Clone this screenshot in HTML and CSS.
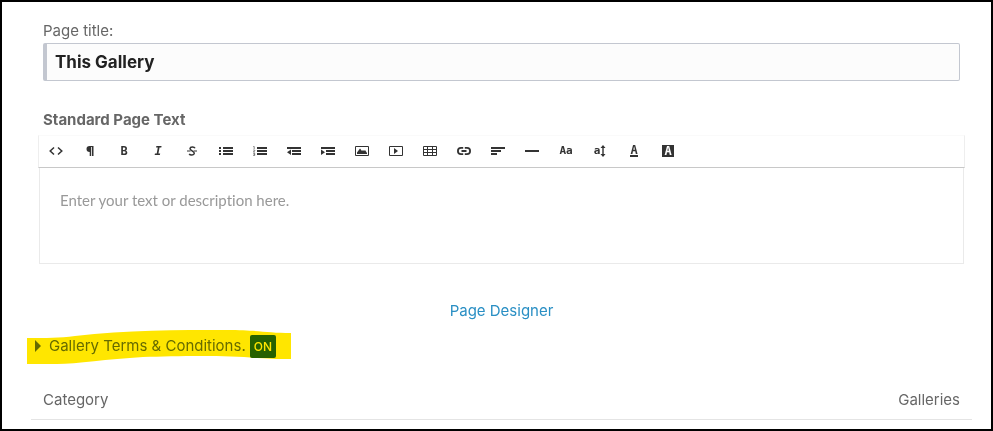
FILE: index.html
```html
<!DOCTYPE html>
<html lang="en">
<head>
<meta charset="utf-8">
<title>Gallery page settings</title>
<link rel="stylesheet" href="styles.css">
</head>
<body>
<main class="frame">
  <form class="fields">
    <label class="label" for="page-title">Page title:</label>
    <input class="title-input" id="page-title" type="text" value="This Gallery">
    <h2 class="heading" id="text-heading">Standard Page Text</h2>
  </form>

  <section class="editor" aria-labelledby="text-heading">
    <div class="toolbar" role="toolbar" aria-label="Formatting">
      <button class="tool" type="button" aria-label="HTML"><svg viewBox="0 0 14 14"><path class="line" d="M5 3.500 1.200 7 5 10.500M9 3.500 12.800 7 9 10.500"/></svg></button>
      <button class="tool" type="button" aria-label="Format"><svg viewBox="0 0 14 14"><path d="M10.500 2v10H9V3h-.8v9H6.700V8C4.500 8 3.500 6.800 3.500 5s1-3 3.200-3z"/></svg></button>
      <button class="tool" type="button" aria-label="Bold">B</button>
      <button class="tool italic" type="button" aria-label="Italic">I</button>
      <button class="tool" type="button" aria-label="Strikethrough"><svg viewBox="0 0 14 14"><path class="line" d="M10 4.200C9.300 2.600 5.200 2.500 5 4.600 4.900 6.500 9.500 7.200 9.300 9.300 9.100 11.400 5 11.300 4.200 9.800"/><path d="M2 6.400h3.500v1.200H2zM8.500 6.400H12v1.200H8.500z"/></svg></button>
      <button class="tool" type="button" aria-label="Bulleted list"><svg viewBox="0 0 14 14"><path d="M0 3h2v2H0zM0 6h2v2H0zM0 9h2v2H0zM4 3h10v2H4zM4 6h10v2H4zM4 9h10v2H4z"/></svg></button>
      <button class="tool" type="button" aria-label="Numbered list"><svg viewBox="0 0 14 14"><path d="M4 3h10v2H4zM4 6h10v2H4zM4 9h10v2H4z"/><path class="thin" d="M.3 2.500h.9V5M.2 6h1.500v.7L.4 8h1.500M.2 9.300h1.500v2.200H.2M.6 10.400h1"/></svg></button>
      <button class="tool" type="button" aria-label="Outdent"><svg viewBox="0 0 14 14"><path d="M0 3h14v2H0zM5 6h9v2H5zM5 9h9v2H5zM4 5.500v5.500L0 8.200z"/></svg></button>
      <button class="tool" type="button" aria-label="Indent"><svg viewBox="0 0 14 14"><path d="M0 3h14v2H0zM5 6h9v2H5zM5 9h9v2H5zM0 5.500V11l4-2.800z"/></svg></button>
      <button class="tool" type="button" aria-label="Image"><svg viewBox="0 0 14 14"><path class="box" d="M.5 2.500h13v9H.5z"/><path d="M2 10V8.500l3-4 2 2.500 1-1 1 1 1-1 2 3v1z"/></svg></button>
      <button class="tool" type="button" aria-label="Video"><svg viewBox="0 0 14 14"><path class="box" d="M.5 2.500h13v9H.5z"/><path d="M5 4v6l4-3z"/></svg></button>
      <button class="tool" type="button" aria-label="Table"><svg viewBox="0 0 14 14"><path class="box" d="M.5 2.500h13v9H.5zM.5 5.500h13M.5 8.500h13M4.500 2.500v9M9.500 2.500v9"/></svg></button>
      <button class="tool" type="button" aria-label="Link"><svg viewBox="0 0 14 14"><path class="link-line" d="M6.200 3.900H4a3.100 3.100 0 0 0 0 6.200h2.200M7.800 3.900H10a3.100 3.100 0 0 1 0 6.200H7.800M4.500 7h5"/></svg></button>
      <button class="tool" type="button" aria-label="Alignment"><svg viewBox="0 0 14 14"><path d="M0 3h14v2H0zM0 6h10v2H0zM0 9h6v2H0z"/></svg></button>
      <button class="tool" type="button" aria-label="Horizontal rule"><svg viewBox="0 0 14 14"><path d="M0 6h14v2H0z"/></svg></button>
      <button class="tool small" type="button" aria-label="Font">Aa</button>
      <button class="tool small" type="button" aria-label="Font size">a<svg class="arrow" viewBox="0 0 6 14"><path d="M3 1 5.500 4H3.700v6h1.800L3 13 .5 10h1.800V4H.5z"/></svg></button>
      <button class="tool" type="button" aria-label="Text colour"><span class="underlined">A</span></button>
      <button class="tool" type="button" aria-label="Background colour"><span class="inverse">A</span></button>
    </div>
    <textarea class="text" aria-label="Standard Page Text" placeholder="Enter your text or description here."></textarea>
  </section>

  <nav class="designer"><a href="#designer">Page Designer</a></nav>

  <div class="terms-row">
    <button class="terms" type="button" aria-expanded="false">
      <svg class="caret" viewBox="0 0 6 12"><path d="M0 0l6 6-6 6z"/></svg>
      <span class="terms-label">Gallery Terms &amp; Conditions.</span>
      <span class="badge">ON</span>
    </button>
    <svg class="marker" viewBox="0 0 264 34" aria-hidden="true"><path d="M0 8C20 8 32 8 48 6 100 0 150 0 200 0 230 0 240 3 264 3V29C252 29 246 29 230 28 200 25 150 26 116 27 80 29 50 34 30 34H0z"/></svg>
  </div>

  <table class="listing">
    <thead>
      <tr><th scope="col">Category</th><th class="end" scope="col">Galleries</th></tr>
    </thead>
  </table>
</main>
</body>
</html>
```
FILE: styles.css
```css
* {
  box-sizing: border-box;
}

body {
  margin: 0;
  background: #fff;
  color: #666;
  font: 15px/20px Inter, "Liberation Sans", sans-serif;
}

.frame {
  min-height: 100vh;
  padding: 19px 19px 9px 29px;
  border: 2px solid #000;
}

.fields {
  padding: 0 12px;
}

.label {
  display: block;
  margin-bottom: 2px;
}

.title-input {
  display: block;
  width: 100%;
  height: 38px;
  padding: 0 8px;
  border: 1px solid #c3c7d0;
  border-left-width: 4px;
  border-radius: 2px;
  background: #fcfcfc;
  color: #222;
  font: 700 17px/20px Inter, "Liberation Sans", sans-serif;
}

.heading {
  margin: 29px 0 5px;
  font-size: 15px;
  font-weight: 700;
}

.editor {
  margin: 0 8px;
}

.toolbar {
  display: flex;
  flex-wrap: wrap;
  margin: 0 -1px;
  padding-bottom: 1px;
  border: 1px solid #eee;
  border-top-color: #fafafa;
  border-bottom-color: #c8c8c8;
}

.tool {
  display: flex;
  align-items: center;
  justify-content: center;
  width: 34px;
  height: 30px;
  padding: 0;
  border: 0;
  background: none;
  color: #333;
  font: bold 12px/14px "DejaVu Sans Mono", monospace;
}

.tool svg {
  width: 14px;
  height: 14px;
  fill: #333;
}

.tool .arrow {
  width: 6px;
}

.tool .line,
.tool .link-line,
.tool .box,
.tool .thin {
  fill: none;
  stroke: #333;
}

.tool .line {
  stroke-width: 1.5;
}

.tool .link-line {
  stroke-width: 1.8;
}

.tool .thin {
  stroke-width: 0.6;
}

.italic {
  font-style: italic;
}

.tool.small {
  font-size: 11px;
}

.underlined {
  height: 12px;
  border-bottom: 2px solid #333;
  line-height: 10px;
}

.inverse {
  width: 12px;
  height: 12px;
  background: #333;
  color: #fff;
  line-height: 12px;
}

.text {
  display: block;
  width: 100%;
  height: 96px;
  padding: 22px 20px;
  border: 1px solid #eaeaea;
  border-top: 0;
  outline: 0;
  resize: none;
  color: #333;
  font: 15px/20px Lato, sans-serif;
  font-variant-ligatures: none;
}

.text::placeholder {
  color: #999;
}

.designer {
  margin: 37px 0 15px;
  text-align: center;
}

.designer a {
  color: #2a8fc4;
  text-decoration: none;
}

.terms-row {
  position: relative;
  padding-left: 4px;
}

.terms {
  display: flex;
  align-items: center;
  height: 20px;
  padding: 0;
  border: 0;
  background: none;
  color: #667766;
  font: inherit;
}

.caret {
  width: 6px;
  height: 12px;
  margin-right: 8px;
  fill: #667766;
}

.badge {
  margin-left: 4px;
  padding: 2px 4px 1px;
  border-radius: 2px;
  background: #266b00;
  color: #fff;
  font-size: 12px;
  font-weight: 500;
}

.marker {
  position: absolute;
  top: -6px;
  left: -4px;
  width: 264px;
  height: 34px;
  fill: #ffe600;
  mix-blend-mode: multiply;
  pointer-events: none;
}

.listing {
  width: 100%;
  margin-top: 34px;
  border-collapse: collapse;
  border-bottom: 1px solid #e4e4e4;
}

.listing th {
  padding: 0 12px 9px;
  font-weight: 400;
  text-align: left;
}

.listing .end {
  text-align: right;
}
```
